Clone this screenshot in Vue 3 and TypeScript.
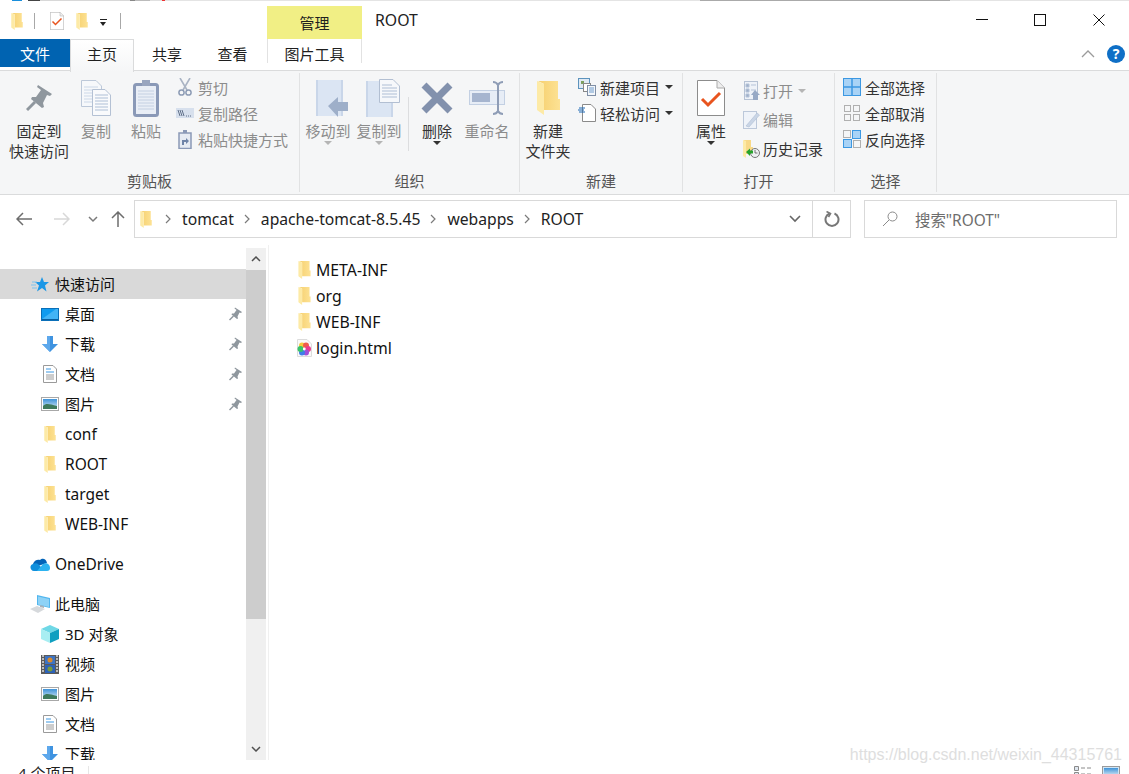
<script setup lang="ts">
interface NavRow {
  label: string
  icon: string
  w: number
  h: number
  level: 'top' | 'child'
  pinned?: boolean
  active?: boolean
  gapBefore?: boolean
}

const navRows: NavRow[] = [
  { label: '快速访问', icon: 'star', w: 18, h: 15, level: 'top', active: true },
  { label: '桌面', icon: 'desktop', w: 18, h: 13, level: 'child', pinned: true },
  { label: '下载', icon: 'download', w: 16, h: 16, level: 'child', pinned: true },
  { label: '文档', icon: 'doc', w: 14, h: 18, level: 'child', pinned: true },
  { label: '图片', icon: 'pic', w: 18, h: 14, level: 'child', pinned: true },
  { label: 'conf', icon: 'folder', w: 12, h: 17, level: 'child' },
  { label: 'ROOT', icon: 'folder', w: 12, h: 17, level: 'child' },
  { label: 'target', icon: 'folder', w: 12, h: 17, level: 'child' },
  { label: 'WEB-INF', icon: 'folder', w: 12, h: 17, level: 'child' },
  { label: 'OneDrive', icon: 'onedrive', w: 20, h: 13, level: 'top', gapBefore: true },
  { label: '此电脑', icon: 'pc', w: 20, h: 18, level: 'top', gapBefore: true },
  { label: '3D 对象', icon: '3d', w: 18, h: 18, level: 'child' },
  { label: '视频', icon: 'video', w: 18, h: 19, level: 'child' },
  { label: '图片', icon: 'pic', w: 18, h: 14, level: 'child' },
  { label: '文档', icon: 'doc', w: 14, h: 18, level: 'child' },
  { label: '下载', icon: 'download', w: 16, h: 16, level: 'child' }
]

const isLatin = (s: string): boolean => /^[\x00-\x7f]+$/.test(s)

const files = [
  { name: 'META-INF', icon: 'folder', w: 13, h: 18 },
  { name: 'org', icon: 'folder', w: 13, h: 18 },
  { name: 'WEB-INF', icon: 'folder', w: 13, h: 18 },
  { name: 'login.html', icon: 'html', w: 15, h: 18 }
]

const crumbs = ['tomcat', 'apache-tomcat-8.5.45', 'webapps', 'ROOT']
</script>

<template>
  <div class="window">
    <svg class="defs" width="0" height="0" aria-hidden="true">
      <defs>
        <linearGradient id="fold" x1="0" y1="0" x2="1" y2="0">
          <stop offset="0" stop-color="#f6d06f" />
          <stop offset="1" stop-color="#fde294" />
        </linearGradient>
        <linearGradient id="sky" x1="0" y1="0" x2="0" y2="1">
          <stop offset="0" stop-color="#3f93d8" />
          <stop offset="1" stop-color="#dcecf6" />
        </linearGradient>
      </defs>
      <symbol id="folder" viewBox="0 0 23 34">
        <path d="M1 0H21V18H23V29H7V3Z" fill="url(#fold)" />
        <path d="M0 0L7 3V34L0 29Z" fill="#fdeaa6" />
      </symbol>
      <symbol id="pin" viewBox="0 0 26 28">
        <path d="M12 1L26 10L24 12L21 11L17 19L18 23L16 24L5 15L6 13L10 13L15 6L11 3Z" fill="#8f979e" />
        <path d="M9 18L1 26" stroke="#8f979e" stroke-width="3" />
      </symbol>
      <symbol id="copy" viewBox="0 0 30 36">
        <path d="M.5.5H15L20.5 6V26.5H.5Z" fill="#f6f8fb" stroke="#bcc8d9" />
        <path d="M3 7H17M3 10H17M3 13H17M3 16H17M3 19H17M3 22H17" stroke="#ccd8e8" />
        <path d="M11.500 9.500H24L29.500 15V35.500H11.500Z" fill="#f9fafc" stroke="#b4c1d4" />
        <path d="M14 15H27M14 18H27M14 21H27M14 24H27M14 27H27M14 30H27" stroke="#aebfd6" />
      </symbol>
      <symbol id="paste" viewBox="0 0 26 37">
        <rect x="1.500" y="4.500" width="23" height="31" rx="2" fill="#e9eef6" stroke="#8a99b7" stroke-width="3" />
        <path d="M5 11H21M5 14H21M5 17H21M5 20H21M5 23H21M5 26H21M5 29H21" stroke="#c4d0e2" />
        <rect x="9" y="0" width="8" height="6" fill="#98a5bf" />
      </symbol>
      <symbol id="scissors" viewBox="0 0 14 18">
        <path d="M2 0L9 12M12 0L5 12" stroke="#aab4c4" stroke-width="1.600" fill="none" />
        <circle cx="3.500" cy="14.500" r="2.600" fill="none" stroke="#8d9cb5" stroke-width="1.500" />
        <circle cx="10.500" cy="14.500" r="2.600" fill="none" stroke="#8d9cb5" stroke-width="1.500" />
      </symbol>
      <symbol id="copypath" viewBox="0 0 18 10">
        <rect width="18" height="10" fill="#d7e0ed" />
        <path d="M2 2L4 8M4 2L6 8M6 2L8 8" stroke="#5f6f88" />
        <path d="M10 8H11M12 8H13M14 8H15" stroke="#5f6f88" />
      </symbol>
      <symbol id="shortcut" viewBox="0 0 14 19">
        <rect x="1" y="3" width="12" height="15.500" fill="#e6ebf3" stroke="#8a99b7" stroke-width="1.500" />
        <rect x="5" y="0" width="4" height="3" fill="#8a99b7" />
        <path d="M4 15V10H8V8L11 11L8 14V12H6V15Z" fill="#6f84a8" />
      </symbol>
      <symbol id="moveto" viewBox="0 0 32 37">
        <path d="M0 0H27V36H0Z" fill="#dbe5f3" />
        <path d="M0 0H2V36H0ZM25 0H27V36H25Z" fill="#c9d6e9" />
        <path d="M12 26L22 17V22H32V31H22V37Z" fill="#9eafc9" />
      </symbol>
      <symbol id="copyto" viewBox="0 0 34 38">
        <path d="M0 2H27V38H0Z" fill="#dbe5f3" />
        <path d="M0 2H2V38H0ZM25 2H27V38H25Z" fill="#c9d6e9" />
        <path d="M13.500.5H27L33.500 7V23.500H13.500Z" fill="#f6f8fb" stroke="#b2bfd2" />
        <path d="M16 6H26M16 9H31M16 12H31M16 15H31M16 18H31" stroke="#aebed5" />
      </symbol>
      <symbol id="del" viewBox="0 0 32 32">
        <path d="M3 3L29 29M29 3L3 29" stroke="#8291ad" stroke-width="7" />
      </symbol>
      <symbol id="rename" viewBox="0 0 37 34">
        <rect x=".5" y="9.500" width="35" height="14" fill="#e7edf6" stroke="#c3d0e3" />
        <rect x="3" y="12" width="18" height="9" fill="#a6b5cf" />
        <path d="M24 1C27 1 28 2 29 4C30 2 31 1 34 1M29 4V30M24 33C27 33 28 32 29 30C30 32 31 33 34 33" stroke="#8f9db6" stroke-width="2" fill="none" />
      </symbol>
      <symbol id="newitem" viewBox="0 0 18 18">
        <rect x=".5" y=".5" width="11" height="10" fill="#dfe9f4" stroke="#5c93bd" />
        <rect x="3" y="3" width="3" height="3" fill="#7da060" />
        <rect x="5.500" y="5.500" width="7" height="8" fill="#fff" stroke="#888" />
        <rect x="9.500" y="7.500" width="8" height="10" fill="#f3f6fa" stroke="#7f8fa6" />
        <path d="M11 10H16M11 12H16M11 14H16" stroke="#6f9ccc" />
      </symbol>
      <symbol id="easy" viewBox="0 0 18 18">
        <path d="M4.500.5H13L17.500 5V17.500H4.500Z" fill="#fff" stroke="#8a8a8a" />
        <path d="M1 4H7M0 6H6M1 8H7" stroke="#1d69b6" stroke-width="1.200" />
      </symbol>
      <symbol id="props" viewBox="0 0 28 36">
        <path d="M.5.5H20L27.500 8V35.500H.5Z" fill="#fff" stroke="#8c8c8c" />
        <path d="M20 .5V8H27.500" fill="#eee" stroke="#aaa" />
        <path d="M5 19L11 25L23 13" stroke="#e8541e" stroke-width="3" fill="none" />
      </symbol>
      <symbol id="open" viewBox="0 0 16 19">
        <rect x=".5" y=".5" width="13" height="18" fill="#eef2f8" stroke="#b6c2d4" />
        <path d="M2 3H5V6H2ZM2 8H5V11H2ZM2 13H5V16H2ZM7 4H12M7 9H12" fill="#9fb0c9" stroke="#b5c3d8" />
        <path d="M7 14L11 9L16 14H14V19H9V14Z" fill="#97a9c5" />
      </symbol>
      <symbol id="edit" viewBox="0 0 17 18">
        <rect x=".5" y=".5" width="13" height="17" fill="#eff3f9" stroke="#bcc8da" />
        <path d="M3 15L14 2L16.500 4L6 16Z" fill="#c9d5e6" stroke="#aebdd3" stroke-width=".6" />
      </symbol>
      <symbol id="history" viewBox="0 0 17 18">
        <path d="M1 0H8V7H10V14H1Z" fill="#f8d987" />
        <path d="M0 0L3 1V18L0 16Z" fill="#fdeaa6" />
        <circle cx="12" cy="13" r="4.500" fill="#eef0f2" stroke="#777" />
        <path d="M12 10V13H14.500" stroke="#555" fill="none" stroke-width=".8" />
        <path d="M3 12L7 8.500V10.500H10V13.500H7V16Z" fill="#27a32b" />
      </symbol>
      <symbol id="selall" viewBox="0 0 18 18">
        <rect x=".5" y=".5" width="17" height="17" fill="#a9d3f6" stroke="#3c98e2" />
        <path d="M9 0V18M0 9H18" stroke="#3c98e2" stroke-width="1.500" />
      </symbol>
      <symbol id="selnone" viewBox="0 0 16 16">
        <rect x=".5" y=".5" width="6" height="6" fill="none" stroke="#b0b0b0" />
        <rect x="9.500" y=".5" width="6" height="6" fill="none" stroke="#b0b0b0" />
        <rect x=".5" y="9.500" width="6" height="6" fill="none" stroke="#b0b0b0" />
        <rect x="9.500" y="9.500" width="6" height="6" fill="none" stroke="#b0b0b0" />
      </symbol>
      <symbol id="selinv" viewBox="0 0 18 18">
        <rect x=".5" y=".5" width="7" height="7" fill="none" stroke="#b0b0b0" />
        <rect x="9.500" y=".5" width="8" height="8" fill="#a9d3f6" stroke="#3c98e2" />
        <rect x=".5" y="9.500" width="8" height="8" fill="#a9d3f6" stroke="#3c98e2" />
        <rect x="10.500" y="10.500" width="7" height="7" fill="none" stroke="#b0b0b0" />
      </symbol>
      <symbol id="star" viewBox="0 0 18 15">
        <path d="M11 0L13 5H18L14 8.500L15.500 14.500L11 11L6 14.500L8 8.500L4 5H9Z" fill="#1b97e6" />
        <path d="M1 5H6M0 8H5M1 11H6" stroke="#7cc3ef" />
      </symbol>
      <symbol id="desktop" viewBox="0 0 18 13">
        <rect x=".5" y=".5" width="17" height="12" fill="#0f9bef" stroke="#0a6fb8" />
        <path d="M1 11L15 1H17V11Z" fill="#43b4f6" />
        <path d="M1 11.500H17" stroke="#0a5f9f" />
      </symbol>
      <symbol id="download" viewBox="0 0 16 16">
        <path d="M5 0H11V8H16L8 16L0 8H5Z" fill="#3f93e0" />
        <path d="M5 0H8V16L0 8H5Z" fill="#5da8ec" />
      </symbol>
      <symbol id="doc" viewBox="0 0 14 18">
        <path d="M.5.5H10L13.500 4V17.500H.5Z" fill="#fff" stroke="#9a9a9a" />
        <path d="M3 4H8M3 7H11" stroke="#3c98e2" />
        <path d="M3 10H11M3 12H11M3 14H11" stroke="#9a9a9a" />
      </symbol>
      <symbol id="pic" viewBox="0 0 18 14">
        <rect x=".5" y=".5" width="17" height="13" fill="#fff" stroke="#a8a8a8" />
        <rect x="2" y="2" width="14" height="10" fill="url(#sky)" />
        <path d="M2 9C5 6 8 7 16 9V12H2Z" fill="#3f7a5c" />
      </symbol>
      <symbol id="onedrive" viewBox="0 0 20 13">
        <path d="M3 6C4 2 8 1 10 2C12 0 16 0 17 5L8 8Z" fill="#0364b8" />
        <path d="M4 13C0 13 -1 7 3 6C5 5 7 5 8 6L15 13Z" fill="#0f8fdc" />
        <path d="M7 13L13 6C16 4 20 6 20 10C20 12 19 13 17 13Z" fill="#2db3f0" />
      </symbol>
      <symbol id="pc" viewBox="0 0 20 18">
        <path d="M7 0L20 3V13L7 10Z" fill="#52b6ee" />
        <path d="M8 1.500L19 4V12L8 9.500Z" fill="#8ed2f6" />
        <path d="M0 14L7 11L15 14L8 18Z" fill="#d6d9dc" />
        <path d="M10 10L14 11V13L10 12Z" fill="#a9b2ba" />
      </symbol>
      <symbol id="3d" viewBox="0 0 18 18">
        <path d="M9 0L18 4L9 8L0 4Z" fill="#6fd8e6" />
        <path d="M0 4L9 8V18L0 14Z" fill="#a8eef2" />
        <path d="M18 4L9 8V18L18 14Z" fill="#0f9fc0" />
      </symbol>
      <symbol id="video" viewBox="0 0 18 19">
        <rect width="18" height="19" fill="#5a5a5a" />
        <path d="M1 1H3M1 4H3M1 7H3M1 10H3M1 13H3M1 16H3M15 1H17M15 4H17M15 7H17M15 10H17M15 13H17M15 16H17" stroke="#ddd" stroke-width="1.500" />
        <rect x="4" y="1" width="10" height="8" fill="#3d74c4" />
        <rect x="4" y="10" width="10" height="8" fill="#2c62b8" />
        <circle cx="9" cy="5" r="2.500" fill="#d98a2c" />
        <circle cx="9" cy="14" r="2.500" fill="#7a9a3a" />
      </symbol>
      <symbol id="html" viewBox="0 0 15 18">
        <path d="M.5.500H10L14.500 5V17.500H.5Z" fill="#fafafa" stroke="#dcdcdc" />
        <circle cx="5" cy="6.500" r="3" fill="#f6c93b" />
        <circle cx="9" cy="6.500" r="3" fill="#ef5b4b" />
        <circle cx="11" cy="10" r="3" fill="#e93d8c" />
        <circle cx="9" cy="13.500" r="3" fill="#a04fd8" />
        <circle cx="5" cy="13.500" r="3" fill="#3f7fe8" />
        <circle cx="3.500" cy="10" r="3" fill="#39c46a" />
        <circle cx="7.300" cy="10" r="1.400" fill="#fff" />
      </symbol>
    </svg>

    <div class="strip"></div>

    <header class="titlebar">
      <div class="qat">
        <svg width="12" height="17"><use href="#folder" /></svg>
        <span class="qat-sep"></span>
        <svg class="qat-props" width="14" height="18"><use href="#props" /></svg>
        <svg class="qat-folder" width="12" height="17"><use href="#folder" /></svg>
        <span class="qat-menu"></span>
        <span class="qat-sep qat-sep-2"></span>
      </div>
      <div class="manage">管理</div>
      <div class="title">ROOT</div>
      <div class="controls">
        <span class="ctl"><svg width="12" height="12"><path d="M0 5.500H12" stroke="#111" /></svg></span>
        <span class="ctl"><svg width="12" height="12"><rect x=".5" y=".5" width="11" height="11" fill="none" stroke="#111" /></svg></span>
        <span class="ctl"><svg width="12" height="12"><path d="M.5.500L11.500 11.500M11.500.500L.5 11.500" stroke="#111" /></svg></span>
      </div>
    </header>

    <nav class="tabs">
      <span class="tab file">文件</span>
      <span class="tab home">主页</span>
      <span class="tab share">共享</span>
      <span class="tab view">查看</span>
      <span class="tab tool">图片工具</span>
      <span class="tabs-right">
        <svg width="14" height="8"><path d="M1 7L7 1L13 7" stroke="#9b9b9b" fill="none" stroke-width="1.300" /></svg>
        <span class="help">?</span>
      </span>
    </nav>

    <section class="ribbon">
      <div class="group g1">
        <div class="group-body">
          <div class="big w70">
            <span class="big-ico"><svg width="26" height="28"><use href="#pin" /></svg></span>
            <span class="big-txt">固定到<br />快速访问</span>
          </div>
          <div class="big w40 ml2 off">
            <span class="big-ico"><svg width="30" height="36"><use href="#copy" /></svg></span>
            <span class="big-txt">复制</span>
          </div>
          <div class="big w40 ml10 off">
            <span class="big-ico"><svg width="26" height="37"><use href="#paste" /></svg></span>
            <span class="big-txt">粘贴</span>
          </div>
          <div class="col ml10 off">
            <div class="row"><span class="sm"><svg width="14" height="18"><use href="#scissors" /></svg></span>剪切</div>
            <div class="row"><span class="sm"><svg width="18" height="10"><use href="#copypath" /></svg></span>复制路径</div>
            <div class="row"><span class="sm"><svg width="14" height="19"><use href="#shortcut" /></svg></span>粘贴快捷方式</div>
          </div>
        </div>
        <div class="group-label">剪贴板</div>
      </div>

      <div class="group g2">
        <div class="group-body">
          <div class="big w50 off">
            <span class="big-ico shift"><svg width="32" height="37"><use href="#moveto" /></svg></span>
            <span class="big-txt">移动到</span><i class="caret light"></i>
          </div>
          <div class="big w50 ml1 off">
            <span class="big-ico shift"><svg width="34" height="38"><use href="#copyto" /></svg></span>
            <span class="big-txt">复制到</span><i class="caret light"></i>
          </div>
          <span class="vsep"></span>
          <div class="big w40 ml8">
            <span class="big-ico"><svg width="32" height="32"><use href="#del" /></svg></span>
            <span class="big-txt">删除</span><i class="caret"></i>
          </div>
          <div class="big w50 ml5 off">
            <span class="big-ico"><svg width="37" height="34"><use href="#rename" /></svg></span>
            <span class="big-txt">重命名</span>
          </div>
        </div>
        <div class="group-label">组织</div>
      </div>

      <div class="group g3">
        <div class="group-body">
          <div class="big w50">
            <span class="big-ico"><svg width="23" height="34"><use href="#folder" /></svg></span>
            <span class="big-txt">新建<br />文件夹</span>
          </div>
          <div class="col ml4">
            <div class="row"><span class="sm sm19"><svg width="18" height="18"><use href="#newitem" /></svg></span>新建项目<i class="caret side"></i></div>
            <div class="row"><span class="sm sm19"><svg width="18" height="18"><use href="#easy" /></svg></span>轻松访问<i class="caret side"></i></div>
          </div>
        </div>
        <div class="group-label">新建</div>
      </div>

      <div class="group g4">
        <div class="group-body">
          <div class="big w40">
            <span class="big-ico"><svg width="28" height="36"><use href="#props" /></svg></span>
            <span class="big-txt">属性</span><i class="caret"></i>
          </div>
          <div class="col col-tall ml12">
            <div class="row off"><span class="sm sm17"><svg width="16" height="19"><use href="#open" /></svg></span>打开<i class="caret side light"></i></div>
            <div class="row off"><span class="sm sm17"><svg width="17" height="18"><use href="#edit" /></svg></span>编辑</div>
            <div class="row"><span class="sm sm17"><svg width="17" height="18"><use href="#history" /></svg></span>历史记录</div>
          </div>
        </div>
        <div class="group-label">打开</div>
      </div>

      <div class="group g5">
        <div class="group-body">
          <div class="col">
            <div class="row"><span class="sm"><svg width="18" height="18"><use href="#selall" /></svg></span>全部选择</div>
            <div class="row"><span class="sm"><svg width="16" height="16"><use href="#selnone" /></svg></span>全部取消</div>
            <div class="row"><span class="sm"><svg width="18" height="18"><use href="#selinv" /></svg></span>反向选择</div>
          </div>
        </div>
        <div class="group-label">选择</div>
      </div>
    </section>

    <div class="addressbar">
      <div class="arrows">
        <svg class="a-back" width="16" height="14"><path d="M7 1L1 7L7 13M1 7H16" stroke="#6d6d6d" stroke-width="1.500" fill="none" /></svg>
        <svg class="a-fwd" width="16" height="14"><path d="M9 1L15 7L9 13M15 7H0" stroke="#d8d8d8" stroke-width="1.500" fill="none" /></svg>
        <svg class="a-down" width="10" height="7"><path d="M1 1L5 5L9 1" stroke="#7a7a7a" stroke-width="1.500" fill="none" /></svg>
        <svg class="a-up" width="14" height="16"><path d="M1 7L7 1L13 7M7 1V16" stroke="#6d6d6d" stroke-width="1.500" fill="none" /></svg>
      </div>
      <div class="address">
        <svg class="addr-folder" width="12" height="17"><use href="#folder" /></svg>
        <template v-for="c in crumbs" :key="c">
          <svg class="crumb-sep" width="6" height="10"><path d="M1 1L5 5L1 9" stroke="#7b7b7b" fill="none" stroke-width="1.200" /></svg>
          <span class="crumb">{{ c }}</span>
        </template>
        <span class="addr-drop">
          <svg width="12" height="8"><path d="M1 1L6 6L11 1" stroke="#666" stroke-width="1.600" fill="none" /></svg>
        </span>
        <span class="addr-refresh">
          <svg width="16" height="16" viewBox="0 0 16 16"><path d="M5.500 2.500A6.500 6.500 0 1 0 10.500 2.500" stroke="#777" stroke-width="2" fill="none" /><path d="M2.500 .5L6.500 2.500L4.500 6" stroke="#777" stroke-width="1.600" fill="none" /></svg>
        </span>
      </div>
      <div class="search">
        <svg width="16" height="16"><circle cx="10.500" cy="5.500" r="4.500" stroke="#8a8a8a" fill="none" /><path d="M7 9L1 15" stroke="#8a8a8a" /></svg>
        <span>搜索"ROOT"</span>
      </div>
    </div>

    <main class="body">
      <aside class="nav">
        <div
          v-for="(r, i) in navRows"
          :key="i"
          class="nav-row"
          :class="[r.level, { active: r.active, gap: r.gapBefore }]"
        >
          <span class="nav-ico"><svg :width="r.w" :height="r.h"><use :href="'#' + r.icon" /></svg></span>
          <span class="nav-txt" :class="{ latin: isLatin(r.label) }">{{ r.label }}</span>
          <svg v-if="r.pinned" class="nav-pin" width="13" height="14"><use href="#pin" /></svg>
        </div>
      </aside>
      <div class="scrollbar">
        <span class="sb-btn"><svg width="10" height="6"><path d="M1 5L5 1L9 5" stroke="#505050" stroke-width="1.500" fill="none" /></svg></span>
        <span class="sb-thumb"></span>
        <span class="sb-track"></span>
        <span class="sb-btn sb-down"><svg width="10" height="6"><path d="M1 1L5 5L9 1" stroke="#505050" stroke-width="1.500" fill="none" /></svg></span>
      </div>
      <div class="files">
        <div v-for="f in files" :key="f.name" class="file-row">
          <span class="file-ico"><svg :width="f.w" :height="f.h"><use :href="'#' + f.icon" /></svg></span>
          <span>{{ f.name }}</span>
        </div>
      </div>
    </main>

    <footer class="status">
      <span class="count">4 个项目</span>
      <span class="status-sep"></span>
      <span class="views">
        <svg width="18" height="10"><path d="M.5.500H4.500V4.500H.5ZM.5 6.500H4.500V10.500H.5Z" fill="#dfe7f0" stroke="#8a8a8a" /><path d="M7 2H11M13 2H17M7 8H11M13 8H17" stroke="#8a8a8a" /></svg>
        <svg class="view-pic" width="18" height="10"><rect x=".5" y=".5" width="17" height="12" fill="#cfe5f6" stroke="#9a9a9a" /><rect x="2" y="2" width="14" height="8" fill="url(#sky)" /></svg>
      </span>
    </footer>

    <div class="watermark">https://blog.csdn.net/weixin_44315761</div>
  </div>
</template>

<style scoped>
.window {
  position: relative;
  width: 1129px;
  height: 774px;
  overflow: hidden;
  background: #fff;
  color: #1f1f1f;
  font-family: "Noto Sans", "Noto Sans CJK SC", sans-serif;
  font-size: 15px;
  display: flex;
  flex-direction: column;
}
.defs { display: block; width: 0; height: 0; }
svg { display: block; flex: none; }
i { display: block; }

.strip {
  height: 1px;
  flex: none;
  background: linear-gradient(90deg,
    #fff 0, #fff 12px, #1a8fdc 12px, #1a8fdc 22px, #fff 22px, #fff 28px, #444 28px, #444 40px,
    #d8d8d8 40px, #d8d8d8 130px, #888 130px, #888 135px, #bbb 135px, #bbb 150px, #e0e0e0 150px,
    #e0e0e0 162px, #e33 162px, #e33 165px, #e4e4e4 165px, #e4e4e4 700px, #aaa 700px, #aaa 950px,
    #e4e4e4 950px);
}

.titlebar {
  height: 38px;
  flex: none;
  display: flex;
  align-items: flex-start;
}
.qat {
  width: 267px;
  box-sizing: border-box;
  flex: none;
  display: flex;
  align-items: center;
  padding: 11px 0 0 11px;
}
.qat-sep { width: 1px; height: 16px; background: #a8a8a8; margin-left: 11px; }
.qat-props { margin-left: 15px; }
.qat-folder { margin-left: 12px; }
.qat-menu {
  width: 7px;
  height: 6px;
  margin-left: 12px;
  margin-top: 3px;
  border-top: 1px solid #222;
}
.qat-menu::after {
  content: "";
  display: block;
  margin: 2px 0 0 0;
  border-left: 3.500px solid transparent;
  border-right: 3.500px solid transparent;
  border-top: 4px solid #222;
  width: 0;
}
.qat-sep-2 { margin-left: 13px; }
.manage {
  width: 95px;
  height: 33px;
  margin-top: 5px;
  background: #f1ef85;
  text-align: center;
  line-height: 35px;
  flex: none;
}
.title { margin-left: 13px; line-height: 38px; color: #222; font-size: 15.800px; }
.controls { margin-left: auto; display: flex; padding-right: 1px; }
.ctl { width: 58.500px; height: 25px; padding-top: 13px; display: flex; justify-content: center; }

.tabs {
  height: 31px;
  flex: none;
  display: flex;
  position: relative;
  z-index: 1;
}
.tab { height: 28px; line-height: 30px; text-align: center; flex: none; box-sizing: border-box; }
.file { width: 70px; background: #0063b1; color: #fff; }
.home {
  width: 64px;
  height: 33px;
  border: 1px solid #dadbdc;
  border-bottom: 0;
  line-height: 28px;
  background: linear-gradient(#fff, #f5f6f7);
}
.share { width: 66px; }
.view { width: 65px; }
.tool {
  width: 95px;
  height: 24px;
  margin-left: 2px;
  border-left: 1px solid #e2e2e2;
  border-right: 1px solid #e2e2e2;
}
.tabs-right {
  margin-left: auto;
  display: flex;
  align-items: center;
  height: 30px;
  padding-right: 4px;
}
.help {
  width: 18px;
  height: 18px;
  margin-left: 12px;
  border-radius: 50%;
  background: #0f6fc6;
  color: #fff;
  font-weight: 700;
  font-size: 14px;
  line-height: 18px;
  text-align: center;
}

.ribbon {
  height: 125px;
  flex: none;
  display: flex;
  background: #f5f6f7;
  border-top: 1px solid #dadbdc;
  border-bottom: 1px solid #dadbdc;
  box-sizing: border-box;
}
.group {
  flex: none;
  display: flex;
  flex-direction: column;
  box-sizing: border-box;
  margin: 2px 0;
  border-right: 1px solid #e1e2e3;
}
.g1 { width: 300px; }
.g2 { width: 220px; }
.g3 { width: 163px; }
.g4 { width: 152px; }
.g5 { width: 102px; }
.group-body { flex: 1; display: flex; align-items: flex-start; padding-top: 5px; }
.g1 .group-body { padding-left: 4px; }
.g2 .group-body, .g3 .group-body { padding-left: 3px; }
.g4 .group-body, .g5 .group-body { padding-left: 8px; }
.group-label { height: 24px; line-height: 26px; text-align: center; color: #555; flex: none; }
.big { display: flex; flex-direction: column; align-items: center; flex: none; }
.big-ico { height: 40px; display: flex; align-items: center; justify-content: center; }
.big-ico.shift { margin-left: 8px; }
.big-txt { margin-top: 3px; line-height: 20px; text-align: center; white-space: nowrap; color: #333; }
.off .big-txt, .row.off, .off .row { color: #8c8c8c; }
.w70 { width: 70px; }
.w50 { width: 50px; }
.w40 { width: 40px; }
.ml1 { margin-left: 1px; }
.ml2 { margin-left: 2px; }
.ml4 { margin-left: 4px; }
.ml5 { margin-left: 5px; }
.ml8 { margin-left: 8px; }
.ml10 { margin-left: 10px; }
.ml12 { margin-left: 12px; }
.vsep { width: 1px; height: 54px; margin: 19px 0 0 4px; background: #dcdddf; flex: none; }
.caret {
  width: 0;
  height: 0;
  border-left: 4px solid transparent;
  border-right: 4px solid transparent;
  border-top: 4px solid #333;
}
.caret.light { border-top-color: #b5b5b5; }
.caret.side { margin-left: 5px; }
.col { margin-top: -4px; flex: none; }
.col-tall { margin-top: -2px; }
.row { height: 26px; display: flex; align-items: center; color: #333; white-space: nowrap; }
.col-tall .row { height: 29px; }
.sm { width: 18px; margin-right: 4px; display: flex; justify-content: center; flex: none; }
.sm19 { width: 19px; }
.sm17 { width: 17px; margin-right: 3px; }

.addressbar {
  height: 50px;
  flex: none;
  display: flex;
  align-items: flex-start;
  padding-top: 5px;
  box-sizing: border-box;
}
.arrows { width: 134px; height: 38px; flex: none; display: flex; align-items: center; }
.a-back { margin-left: 16px; }
.a-fwd { margin-left: 22px; }
.a-down { margin-left: 18px; }
.a-up { margin-left: 13px; }
.address {
  width: 717px;
  height: 38px;
  box-sizing: border-box;
  flex: none;
  border: 1px solid #d9d9d9;
  display: flex;
  align-items: center;
  padding-left: 5px;
  color: #222;
}
.addr-folder { margin-right: 13px; }
.crumb-sep { margin-right: 11px; }
.crumb { margin-right: 10px; white-space: nowrap; font-size: 15.700px; }
.addr-drop { margin-left: auto; width: 34px; display: flex; justify-content: center; }
.addr-refresh {
  width: 38px;
  height: 36px;
  border-left: 1px solid #d9d9d9;
  box-sizing: border-box;
  display: flex;
  align-items: center;
  justify-content: center;
}
.search {
  width: 253px;
  height: 38px;
  margin-left: 13px;
  box-sizing: border-box;
  border: 1px solid #d9d9d9;
  display: flex;
  align-items: center;
  padding-left: 17px;
  gap: 17px;
  color: #6d6d6d;
  flex: none;
  font-size: 15.400px;
}

.body { height: 515px; flex: none; display: flex; overflow: hidden; }
.nav { width: 246px; flex: none; padding-top: 24px; box-sizing: border-box; overflow: hidden; color: #111; }
.nav-row { height: 30px; display: flex; align-items: center; white-space: nowrap; }
.nav-row.top { padding-left: 30px; }
.nav-row.child { padding-left: 40px; }
.nav-row.active { background: #d9d9d9; }
.nav-row.gap { margin-top: 10px; }
.nav-ico { width: 20px; display: flex; justify-content: center; flex: none; margin-right: 5px; }
.nav-txt { margin-top: -2px; }
.nav-txt.latin { font-size: 15.500px; margin-top: 0; }
.nav-pin { margin-left: auto; margin-right: 4px; }
.scrollbar {
  width: 20px;
  flex: none;
  margin-top: 3px;
  background: #f0f0f0;
  display: flex;
  flex-direction: column;
}
.sb-btn { height: 22px; flex: none; display: flex; align-items: center; justify-content: center; }
.sb-thumb { height: 349px; background: #cdcdcd; flex: none; }
.sb-track { flex: 1; }
.files {
  flex: 1;
  margin-left: 2px;
  border-left: 1px solid #f0f0f0;
  padding: 12px 0 0 28px;
  font-size: 15.800px;
}
.file-row { height: 26px; display: flex; align-items: center; white-space: nowrap; color: #111; }
.file-ico { width: 15px; margin-right: 4px; display: flex; justify-content: center; flex: none; }

.status { height: 14px; flex: none; display: flex; overflow: hidden; }
.count { margin-left: 18px; line-height: 26px; white-space: nowrap; }
.status-sep { width: 1px; height: 14px; margin: 6px 0 0 13px; background: #e6e6e6; }
.views { margin-left: auto; display: flex; padding: 6px 9px 0 0; gap: 10px; }

.watermark {
  position: absolute;
  right: 7px;
  top: 746px;
  font-family: "Liberation Sans", sans-serif;
  font-size: 16px;
  line-height: 18px;
  color: #dedede;
  white-space: nowrap;
}
</style>

<style>
html, body { background: #fff; }
</style>
